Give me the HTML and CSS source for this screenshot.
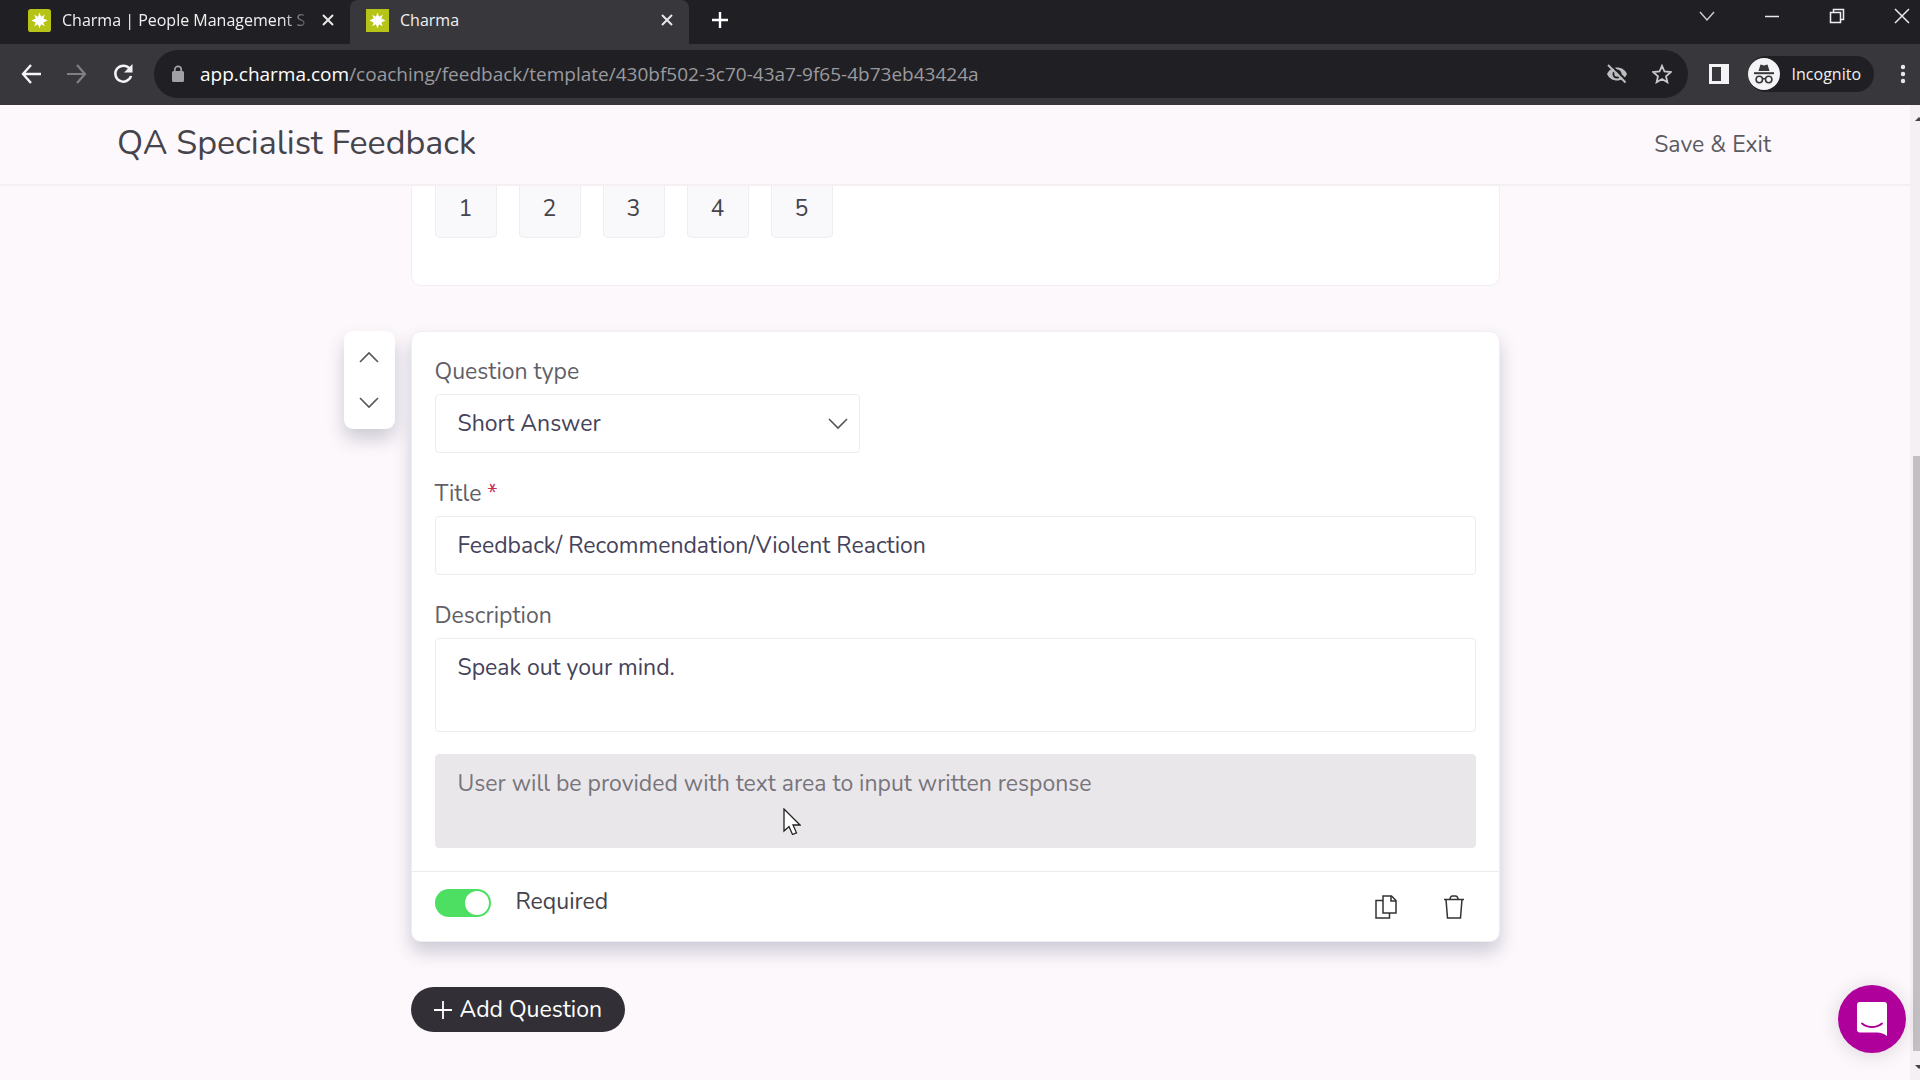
FILE: index.html
```html
<!DOCTYPE html>
<html lang="en">
<head>
<meta charset="utf-8">
<meta name="viewport" content="width=device-width, initial-scale=1">
<title>Charma</title>
<link rel="stylesheet" href="styles.css">
</head>
<body>
<div class="browser">
  <div class="tabstrip">
    <div class="tab">
      <svg class="favicon" viewBox="0 0 24 24" aria-hidden="true"><rect width="24" height="24" rx="3" fill="#b5c416"/><path d="M12 4l1.700 4L17.500 6l-1.500 4 4.500 2-4.500 2 1.500 4-3.800-2L12 20l-1.700-4-3.800 2L8 14l-4.500-2L8 10 6.500 6l3.800 2z" fill="#fff"/></svg>
      <span class="tab-title tab-title-fade">Charma | People Management S</span>
      <button class="icon-button" type="button" aria-label="Close tab"><svg width="12" height="12" viewBox="0 0 12 12"><path d="M1 1l10 10M11 1L1 11" stroke="#e8e8ea" stroke-width="2"/></svg></button>
    </div>
    <div class="tab tab-active">
      <svg class="favicon" viewBox="0 0 24 24" aria-hidden="true"><rect width="24" height="24" fill="#b5c416"/><path d="M12 4l1.700 4L17.500 6l-1.500 4 4.500 2-4.500 2 1.500 4-3.800-2L12 20l-1.700-4-3.800 2L8 14l-4.500-2L8 10 6.500 6l3.800 2z" fill="#fff"/></svg>
      <span class="tab-title">Charma</span>
      <button class="icon-button" type="button" aria-label="Close tab"><svg width="12" height="12" viewBox="0 0 12 12"><path d="M1 1l10 10M11 1L1 11" stroke="#e8e8ea" stroke-width="2"/></svg></button>
    </div>
    <button class="icon-button new-tab" type="button" aria-label="New tab"><svg width="18" height="18" viewBox="0 0 18 18"><path d="M9 1v16M1 9h16" stroke="#fff" stroke-width="2.400"/></svg></button>
    <div class="window-controls">
      <button class="icon-button" type="button" aria-label="Search tabs"><svg width="16" height="16" viewBox="0 0 16 16"><path d="M1 4l7 8 7-8" fill="none" stroke="#d0d0d2" stroke-width="1.400"/></svg></button>
      <button class="icon-button" type="button" aria-label="Minimize"><svg width="16" height="16" viewBox="0 0 16 16"><path d="M1 8.500h14" stroke="#e8e8ea" stroke-width="1.500"/></svg></button>
      <button class="icon-button" type="button" aria-label="Restore"><svg width="16" height="16" viewBox="0 0 16 16"><path d="M1.500 4.500h10v10h-10zM4.500 4V1.500h10v10H12" fill="none" stroke="#f0f0f2" stroke-width="1.500"/></svg></button>
      <button class="icon-button" type="button" aria-label="Close"><svg width="16" height="16" viewBox="0 0 16 16"><path d="M1 1l14 14M15 1L1 15" stroke="#e8e8ea" stroke-width="1.500"/></svg></button>
    </div>
  </div>
  <div class="toolbar">
    <button class="icon-button nav-button" type="button" aria-label="Back"><svg width="20" height="20" viewBox="0 0 20 20"><path d="M20 10H2M10 1L2 10l8 9" fill="none" stroke="#f4f4f6" stroke-width="2.400"/></svg></button>
    <button class="icon-button nav-button" type="button" aria-label="Forward"><svg width="20" height="20" viewBox="0 0 20 20"><path d="M0 10h18M10 1l8 9-8 9" fill="none" stroke="#808084" stroke-width="2.200"/></svg></button>
    <button class="icon-button nav-button" type="button" aria-label="Reload"><svg width="20" height="20" viewBox="0 0 20 20"><path d="M16.500 4.500A8 8 0 1 0 18 12" fill="none" stroke="#f4f4f6" stroke-width="2.500"/><path d="M19.500 0v8.500H11z" fill="#f4f4f6"/></svg></button>
    <div class="address">
      <svg width="12" height="17" viewBox="0 0 12 17" aria-hidden="true"><rect y="6" width="12" height="11" rx="1.500" fill="#a0a0a5"/><path d="M2.800 7V4.500a3.200 3.200 0 0 1 6.400 0V7" fill="none" stroke="#a0a0a5" stroke-width="1.700"/></svg>
      <span class="url"><span class="url-host">app.charma.com</span>/coaching/feedback/template/430bf502-3c70-43a7-9f65-4b73eb43424a</span>
      <button class="icon-button" type="button" aria-label="Third-party cookies blocked"><svg width="22" height="20" viewBox="0 0 22 20"><path d="M1 10c2-4.500 6-6.500 10-6.500S19 5.500 21 10c-2 4.500-6 6.500-10 6.500S3 14.500 1 10z" fill="#bdbdc0"/><circle cx="11" cy="10" r="4.500" fill="#202024"/><circle cx="11" cy="10" r="2.600" fill="#bdbdc0"/><path d="M4 0l17 17" stroke="#202024" stroke-width="2"/><path d="M2 1l17.500 17.500" stroke="#bdbdc0" stroke-width="2"/></svg></button>
      <button class="icon-button star" type="button" aria-label="Bookmark"><svg width="20" height="20" viewBox="0 0 20 20"><path d="M10 1.800l2.500 5.700 6.200.6-4.700 4.100 1.400 6.100-5.400-3.200-5.400 3.200L6 12.200 1.300 8.100l6.200-.6z" fill="none" stroke="#c8c8cb" stroke-width="1.800"/></svg></button>
    </div>
    <button class="icon-button panel-button" type="button" aria-label="Side panel"><svg width="20" height="20" viewBox="0 0 20 20"><path d="M0 0h20v20H0zM3 3v14h9V3z" fill="#f4f4f6" fill-rule="evenodd"/></svg></button>
    <button class="incognito" type="button">
      <svg width="32" height="32" viewBox="0 0 32 32" aria-hidden="true"><circle cx="16" cy="16" r="16" fill="#f4f4f6"/><path d="M10.500 13l2-6.500 3.500 1 3.500-1 2 6.500z" fill="#38383c"/><path d="M6 15.200h20" stroke="#38383c" stroke-width="2"/><g fill="none" stroke="#38383c" stroke-width="1.600"><circle cx="11.300" cy="21.500" r="3.200"/><circle cx="20.700" cy="21.500" r="3.200"/><path d="M14.500 21c1-.6 2-.6 3 0"/></g></svg>
      <span>Incognito</span>
    </button>
    <button class="icon-button menu-button" type="button" aria-label="Menu"><svg width="6" height="20" viewBox="0 0 6 20"><g fill="#e8e8ea"><circle cx="3" cy="3" r="2.200"/><circle cx="3" cy="10" r="2.200"/><circle cx="3" cy="17" r="2.200"/></g></svg></button>
  </div>
</div>

<div class="viewport">
  <div class="page">
    <header class="page-header">
      <h1 class="page-title">QA Specialist Feedback</h1>
      <button class="save" type="button">Save &amp; Exit</button>
    </header>
    <main class="questions">
      <section class="card scale-card" aria-label="Rating scale">
        <button class="rating" type="button">1</button>
        <button class="rating" type="button">2</button>
        <button class="rating" type="button">3</button>
        <button class="rating" type="button">4</button>
        <button class="rating" type="button">5</button>
      </section>

      <div class="mover">
        <button class="icon-button" type="button" aria-label="Move up"><svg width="20" height="12" viewBox="0 0 20 12"><path d="M1 11l9-9 9 9" fill="none" stroke="#555" stroke-width="1.600"/></svg></button>
        <button class="icon-button" type="button" aria-label="Move down"><svg width="20" height="12" viewBox="0 0 20 12"><path d="M1 1l9 9 9-9" fill="none" stroke="#555" stroke-width="1.600"/></svg></button>
      </div>
      <form class="card editor">
        <div class="fields">
          <div class="field">
            <label for="type">Question type</label>
            <div class="select-wrap">
              <select id="type" class="control"><option>Short Answer</option></select>
              <svg class="select-arrow" width="20" height="12" viewBox="0 0 20 12" aria-hidden="true"><path d="M1 1l9 9 9-9" fill="none" stroke="#555" stroke-width="1.600"/></svg>
            </div>
          </div>
          <div class="field">
            <label for="title">Title <span class="star-mark">*</span></label>
            <input id="title" class="control" type="text" value="Feedback/ Recommendation/Violent Reaction">
          </div>
          <div class="field">
            <label for="description">Description</label>
            <textarea id="description" class="control control-area">Speak out your mind.</textarea>
          </div>
          <textarea class="control control-area preview" aria-label="Response preview" disabled>User will be provided with text area to input written response</textarea>
        </div>
        <div class="card-footer">
          <label class="required"><input class="toggle" type="checkbox" checked>Required</label>
          <div class="card-actions">
            <button class="icon-button" type="button" aria-label="Duplicate"><svg width="22" height="24" viewBox="0 0 22 24"><g fill="none" stroke="#333" stroke-width="1.500"><path d="M8 1h8.500L21 5.500V18H8z"/><path d="M16 1v5h5M8 5.500H1V23h13.500v-5"/></g></svg></button>
            <button class="icon-button" type="button" aria-label="Delete"><svg width="20" height="24" viewBox="0 0 20 24"><g fill="none" stroke="#333" stroke-width="1.500"><path d="M0 4.500h20M2 4.500L3.500 23h13L18 4.500M6 4c.3-2 1.300-3 2.500-3h3C12.700 1 13.700 2 14 4"/></g></svg></button>
          </div>
        </div>
      </form>

      <button class="add" type="button"><svg width="18" height="18" viewBox="0 0 18 18" aria-hidden="true"><path d="M9 0v18M0 9h18" stroke="#fff" stroke-width="1.800"/></svg>Add Question</button>
    </main>
  </div>
  <div class="scrollbar" aria-hidden="true">
    <svg width="5" height="4" viewBox="0 0 5 4"><path d="M0 4l4-4 1 1v3z" fill="#444"/></svg>
    <div class="scroll-track"><div class="scroll-thumb"></div></div>
    <svg width="5" height="4" viewBox="0 0 5 4"><path d="M0 0h5v3L4 4z" fill="#444"/></svg>
  </div>
</div>

<button class="chat" type="button" aria-label="Open chat"><svg width="32" height="36" viewBox="0 0 32 36"><path d="M4 1h24a3 3 0 0 1 3 3v31c-3-2-6-3.500-10-3.500H4a3 3 0 0 1-3-3V4a3 3 0 0 1 3-3z" fill="#fff"/><path d="M6 22.500c6 4.800 14 4.800 20 0" fill="none" stroke="#b0009c" stroke-width="2" stroke-linecap="round"/></svg></button>
<svg class="cursor" width="18" height="28" viewBox="0 0 18 28" aria-hidden="true"><path d="M1 1v22l5-4.500 3.500 8 4-1.700L10 17h7z" fill="#fff" stroke="#222" stroke-width="1.300"/></svg>
</body>
</html>
```
FILE: styles.css
```css
* { box-sizing: border-box; }

body {
  margin: 0;
  height: 100vh;
  display: flex;
  flex-direction: column;
  overflow: hidden;
  background: #fcf8fb;
  color: #45434b;
  font: 23px/28px Nunito, Lato, sans-serif;
}

button, input, select, textarea { font: inherit; color: inherit; }

button { border: 0; padding: 0; background: none; }

svg { display: block; flex: none; }

.icon-button { display: flex; align-items: center; justify-content: center; }

/* Browser chrome */
.browser {
  flex: none;
  background: #38383c;
  color: #f0f0f2;
  font: 16px/24px "Segoe UI", "Open Sans", sans-serif;
}

.tabstrip { display: flex; height: 44px; background: #202024; }

.tab {
  display: flex;
  align-items: center;
  width: 350px;
  height: 44px;
  padding: 0 16px 4px 28px;
}

.tab-active {
  width: 339px;
  padding-left: 16px;
  border-radius: 8px 8px 0 0;
  background: #38383c;
}

.favicon { width: 23px; height: 23px; margin-right: 11px; }

.tab-title { flex: 1; min-width: 0; overflow: hidden; white-space: nowrap; }

.tab-title-fade {
  margin-right: 10px;
  -webkit-mask-image: linear-gradient(90deg, #000 88%, transparent);
  mask-image: linear-gradient(90deg, #000 88%, transparent);
}

.new-tab { width: 62px; height: 40px; }

.window-controls { display: flex; gap: 49px; height: 32px; margin-left: auto; padding-right: 10px; }

.toolbar { display: flex; align-items: center; height: 61px; padding: 0 14px 2px 8px; }

.nav-button { width: 46px; }

.address {
  flex: 1;
  min-width: 0;
  display: flex;
  align-items: center;
  height: 48px;
  margin-left: 8px;
  padding: 0 16px 0 18px;
  border-radius: 24px;
  background: #202024;
}

.url {
  flex: 1;
  min-width: 0;
  margin-left: 16px;
  overflow: hidden;
  white-space: nowrap;
  color: #9a9a9f;
  font-size: 19px;
}

.url-host { color: #fff; }

.star { margin-left: 24px; }

.panel-button { margin-left: 21px; }

.incognito {
  display: flex;
  align-items: center;
  gap: 12px;
  height: 36px;
  margin-left: 19px;
  padding-right: 13px;
  border-radius: 18px;
  background: #202024;
}

.menu-button { margin-left: 26px; }

/* Page */
.viewport { flex: 1; min-height: 0; display: flex; }

.page { flex: 1; min-width: 0; }

.page-header {
  display: flex;
  align-items: center;
  justify-content: space-between;
  height: 81px;
  padding: 0 139px 4px 117px;
  border-bottom: 2px solid #f3eff2;
}

.page-title { margin: 0; font-size: 34px; line-height: 44px; font-weight: 400; }

.save { padding-top: 4px; color: #5c5a61; }

.questions {
  display: grid;
  grid-template-columns: minmax(64px, 1fr) minmax(0, 1089px) minmax(64px, 1fr);
  align-items: start;
}

.card { grid-column: 2; border: 1px solid #f0eef2; border-radius: 10px; background: #fff; }

.scale-card {
  display: flex;
  gap: 22px;
  height: 100px;
  margin-bottom: 45px;
  padding: 0 23px;
  border-top: 0;
  border-radius: 0 0 10px 10px;
}

.rating {
  width: 62px;
  height: 52px;
  padding-bottom: 5px;
  border: 1px solid #efedf2;
  border-top: 0;
  border-radius: 0 0 5px 5px;
  background: #f9f8fb;
}

.mover {
  grid-column: 1;
  justify-self: end;
  display: flex;
  flex-direction: column;
  align-items: center;
  justify-content: center;
  gap: 34px;
  width: 51px;
  height: 98px;
  margin-right: 16px;
  border-radius: 9px;
  background: #fff;
  box-shadow: 0 10px 18px rgba(60, 60, 90, 0.24);
}

.editor { box-shadow: 0 10px 18px rgba(60, 60, 100, 0.24); }

.fields { padding: 26px 23px 23px; }

.field { display: flex; flex-direction: column; gap: 8px; margin-bottom: 27px; color: #625f67; }

.field:nth-child(3) { margin-bottom: 22px; }

.star-mark { color: #c4305a; }

.control {
  display: block;
  width: 100%;
  height: 59px;
  padding: 0 22px;
  border: 1px solid #edebef;
  border-radius: 4px;
  background: #fff;
  color: #45425a;
}

.select-wrap { position: relative; width: 425px; }

select.control { appearance: none; }

.select-arrow { position: absolute; top: 24px; right: 12px; }

.control-area { height: 94px; padding: 15px 22px; resize: none; overflow: hidden; }

.preview { border-color: #eae7eb; background: #eae7eb; color: #77757b; }

.card-footer {
  display: flex;
  align-items: center;
  justify-content: space-between;
  height: 70px;
  padding: 0 35px 0 23px;
  border-top: 1px solid #eceaee;
}

.required { display: flex; align-items: center; gap: 25px; padding-bottom: 10px; }

.toggle {
  appearance: none;
  display: flex;
  align-items: center;
  justify-content: flex-end;
  width: 56px;
  height: 28px;
  margin: 2px 0 0;
  padding: 2px;
  border-radius: 14px;
  background: #4cdf62;
}

.toggle::before { content: ""; width: 24px; height: 24px; border-radius: 12px; background: #fff; }

.card-actions { display: flex; gap: 47px; }

.add {
  grid-column: 2;
  justify-self: start;
  display: flex;
  align-items: center;
  gap: 8px;
  height: 45px;
  margin-top: 45px;
  padding: 0 23px;
  border-radius: 23px;
  background: #323036;
  color: #fff;
}

.scrollbar {
  display: flex;
  flex-direction: column;
  align-items: flex-end;
  width: 10px;
  padding: 12px 0 11px;
  background: #f4f0f4;
}

.scroll-track { flex: 1; width: 7px; padding: 335px 0 14px; }

.scroll-thumb { height: 100%; background: #c3c0c4; }

.chat {
  position: fixed;
  right: 14px;
  bottom: 27px;
  display: flex;
  align-items: center;
  justify-content: center;
  width: 68px;
  height: 68px;
  border-radius: 50%;
  background: #b0009c;
  box-shadow: 0 2px 20px rgba(0, 0, 0, 0.14);
}

.cursor { position: absolute; left: 783px; top: 808px; }
```
